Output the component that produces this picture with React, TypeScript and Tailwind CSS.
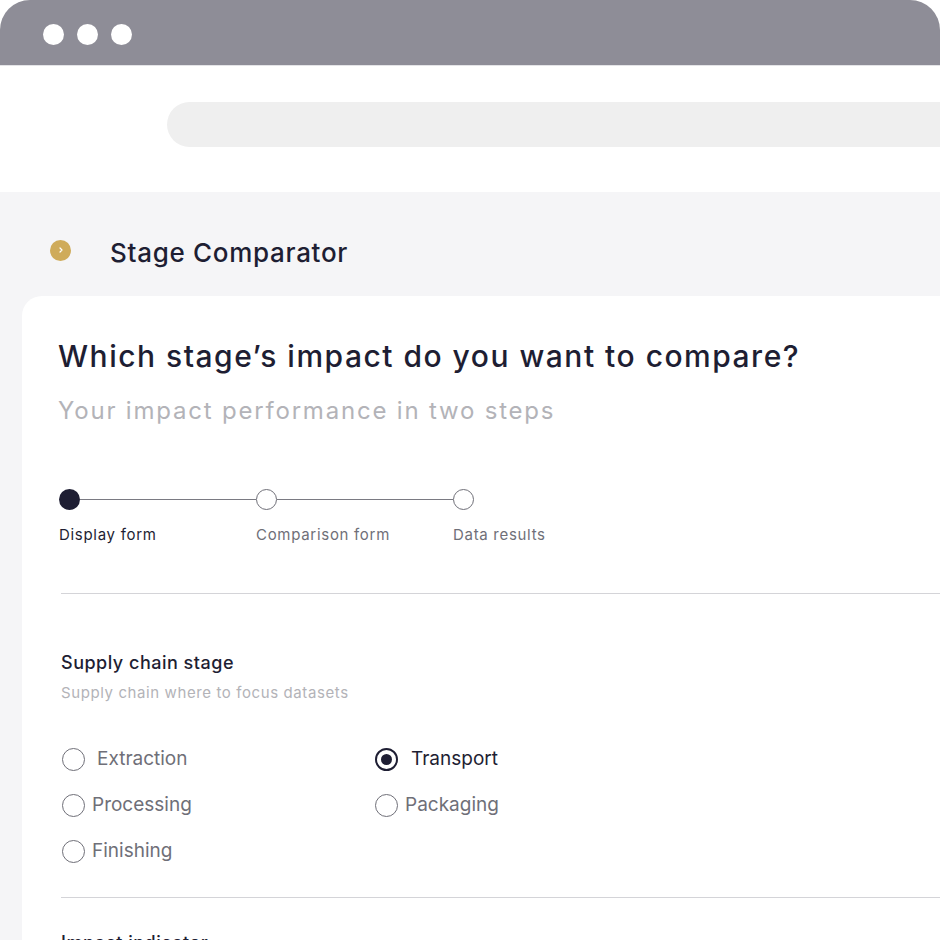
const steps = [
  { label: "Display form", active: true },
  { label: "Comparison form", active: false },
  { label: "Data results", active: false },
];

const stages = [
  { label: "Extraction", checked: false, gap: "ml-[12px]" },
  { label: "Transport", checked: true, gap: "ml-[13px]" },
  { label: "Processing", checked: false, gap: "ml-[7px]" },
  { label: "Packaging", checked: false, gap: "ml-[7px]" },
  { label: "Finishing", checked: false, gap: "ml-[7px]" },
];

const Radio = ({ checked }: { checked: boolean }) =>
  checked ? (
    <span className="flex size-[23px] shrink-0 items-center justify-center rounded-full border-2 border-[#1e1e33]">
      <span className="size-[11px] rounded-full bg-[#1e1e33]" />
    </span>
  ) : (
    <span className="size-[23px] shrink-0 rounded-full border-[1.5px] border-[#6f6f78]" />
  );

export default function App() {
  return (
    <div
      className="flex h-[940px] w-[940px] flex-col overflow-hidden bg-white"
      style={{ fontFamily: "Inter, 'Noto Sans', sans-serif" }}
    >
      {/* browser chrome */}
      <div className="flex h-[65px] shrink-0 items-center gap-[13px] rounded-t-[30px] bg-[#8e8d97] pl-[43px] pt-[3px]">
        <span className="size-[21px] rounded-full bg-white" />
        <span className="size-[21px] rounded-full bg-white" />
        <span className="size-[21px] rounded-full bg-white" />
      </div>
      <div className="h-[127px] shrink-0 border-t border-[#e4e4e7] bg-white pt-[36px] pl-[167px]">
        <div className="h-[45px] w-[820px] rounded-full bg-[#efefef]" />
      </div>

      {/* page */}
      <div className="flex flex-1 flex-col bg-[#f5f5f7]">
        <div className="flex h-[104px] shrink-0 items-center pt-[12px] pl-[50px]">
          <span className="flex size-[21px] items-center justify-center rounded-full bg-[#cfab5a]">
            <svg width="8" height="8" viewBox="0 0 8 8" fill="none">
              <path d="M3 2l2 2-2 2" stroke="white" strokeWidth="1.2" strokeLinecap="round" strokeLinejoin="round" />
            </svg>
          </span>
          <h1 className="ml-[39px] mt-[4px] text-[26px] font-medium tracking-[0.7px] text-[#1e1e33]">
            Stage Comparator
          </h1>
        </div>

        <div className="ml-[22px] flex-1 rounded-tl-[20px] bg-white pt-[42px] pl-[36px]">
          <h2 className="text-[30px] leading-[36px] font-medium tracking-[1.5px] text-[#1e1e33]">
            Which stage’s impact do you want to compare?
          </h2>
          <p className="mt-[21px] text-[24px] leading-[32px] tracking-[1.8px] text-[#b3b3b8]">
            Your impact performance in two steps
          </p>

          {/* stepper */}
          <div className="mt-[62px] flex pl-[1px]">
            {steps.map((s, i) => (
              <div key={s.label} className="flex w-[197px] flex-col">
                <div className="flex items-center">
                  {s.active ? (
                    <span className="size-[21px] shrink-0 rounded-full bg-[#1e1e33]" />
                  ) : (
                    <span className="size-[21px] shrink-0 rounded-full border-[1.5px] border-[#6f6f78] bg-white" />
                  )}
                  {i < steps.length - 1 && <span className="h-px flex-1 bg-[#7a7a82]" />}
                </div>
                <span
                  className={
                    "mt-[15px] text-[15px] leading-[20px] tracking-[0.7px] " +
                    (s.active ? "text-[#1e1e33]" : "text-[#6f6f78]")
                  }
                >
                  {s.label}
                </span>
              </div>
            ))}
          </div>

          <div className="mt-[48px] h-px bg-[#d4d4d8] ml-[3px]" />

          {/* supply chain */}
          <div className="pl-[3px]">
            <h3 className="mt-[57px] text-[18px] leading-[24px] font-medium tracking-[0.5px] text-[#1e1e33]">
              Supply chain stage
            </h3>
            <p className="mt-[8px] text-[15px] leading-[20px] tracking-[0.6px] text-[#b3b3b8]">
              Supply chain where to focus datasets
            </p>

            <div className="mt-[42px] grid grid-cols-[313px_1fr] gap-y-[18px] pl-[1px]">
              {stages.map((s) => (
                <label key={s.label} className="flex h-[28px] items-center">
                  <Radio checked={s.checked} />
                  <span
                    className={
                      s.gap +
                      " text-[19px] leading-[28px] " +
                      (s.checked ? "text-[#1e1e33]" : "text-[#6f6f78]")
                    }
                  >
                    {s.label}
                  </span>
                </label>
              ))}
            </div>

            <div className="mt-[32px] h-px bg-[#d4d4d8]" />

            <h3 className="mt-[33px] text-[18px] leading-[24px] font-medium tracking-[0.5px] text-[#1e1e33]">
              Impact indicator
            </h3>
          </div>
        </div>
      </div>
    </div>
  );
}
